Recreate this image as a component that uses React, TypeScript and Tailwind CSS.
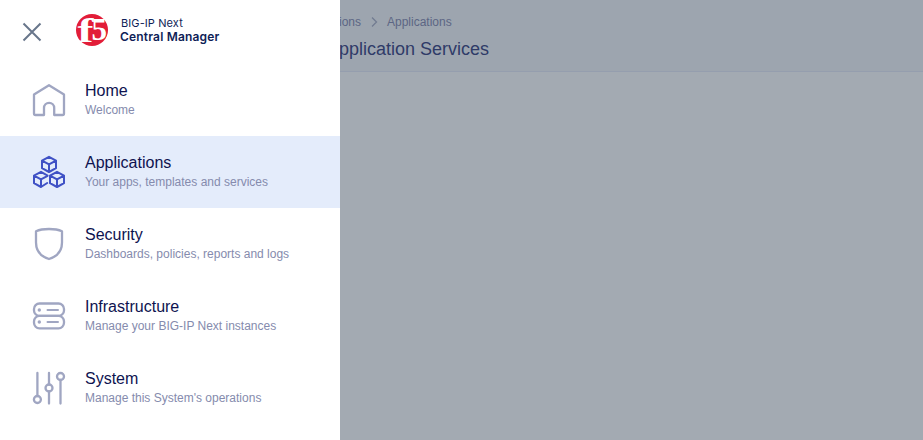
import type { ReactNode } from "react";

function Icon({ children }: { children: ReactNode }) {
  return (
    <svg
      className="size-10 shrink-0"
      viewBox="0 0 40 40"
      fill="none"
      stroke="currentColor"
      strokeWidth="2.3"
      strokeLinecap="round"
      strokeLinejoin="round"
    >
      {children}
    </svg>
  );
}

const items = [
  {
    title: "Home",
    text: "Welcome",
    icon: <path d="M5 14.5 20 5.2 35 14.5V33.5Q35 35 33.5 35H25.2V28A5.1 5.1 0 0 0 15 28V35H6.5Q5 35 5 33.5Z" />,
  },
  {
    title: "Applications",
    text: "Your apps, templates and services",
    active: true,
    icon: (
      <g strokeWidth="2">
        <path d="M20 4.8 27 8.6V16.2L20 20 13 16.2V8.6ZM13.5 8.8 20 12.4 26.5 8.8M20 12.4V19.5" />
        <path d="M18.2 31 12 35 5 31.2V23.6L12 19.8 18.6 23.6M5.5 23.8 12 27.4 18.6 23.8M12 27.4V34.5" />
        <path d="M28 19.8 35 23.6V31.2L28 35 21 31.2V23.6ZM21.5 23.8 28 27.4 34.5 23.8M28 27.4V34.5" />
      </g>
    ),
  },
  {
    title: "Security",
    text: "Dashboards, policies, reports and logs",
    icon: <path d="M7 7.3Q12 5 20 5T33 7.3V18.5C33 27 28 32.5 20 35C12 32.5 7 27 7 18.5Z" />,
  },
  {
    title: "Infrastructure",
    text: "Manage your BIG-IP Next instances",
    icon: (
      <>
        <rect x="5" y="7.5" width="30" height="12.4" rx="5.5" />
        <rect x="5" y="19.9" width="30" height="12.4" rx="5.5" />
        <path d="M18.5 14H29M18.5 26H29" strokeWidth="2" />
        <path d="M10.3 14H10.31M10.3 26H10.31" strokeWidth="3.4" />
      </>
    ),
  },
  {
    title: "System",
    text: "Manage this System's operations",
    icon: (
      <>
        <path d="M8.4 5V28M20 5V16.5M20 23.5V35.5M31.5 12V35.5" />
        <circle cx="8.4" cy="31.5" r="3.5" />
        <circle cx="20" cy="20" r="3.5" />
        <circle cx="31.5" cy="8.5" r="3.5" />
      </>
    ),
  },
];

export default function App() {
  return (
    <div className="flex h-[440px] w-full overflow-hidden font-['Liberation_Sans',Arial,sans-serif]">
      <aside className="w-[340px] shrink-0 bg-white">
        <header className="flex h-16 items-start pt-3">
          <svg className="mt-2 ml-[21px] size-[22px]" viewBox="0 0 22 22" fill="none" stroke="#68768b" strokeWidth="2">
            <path d="M2.5 3.5 19.5 20.5M19.5 3.5 2.5 20.5" />
          </svg>
          <svg className="ml-8 size-9" viewBox="0 0 36 36">
            <circle cx="17" cy="18" r="16" fill="#e21d38" />
            <g fill="white" fontFamily="Liberation Serif" fontWeight="700">
              <text x="2.5" y="29.5" fontSize="34" textLength="16" lengthAdjust="spacingAndGlyphs">f</text>
              <text x="16.5" y="28" fontSize="32" textLength="15.5" lengthAdjust="spacingAndGlyphs">5</text>
            </g>
          </svg>
          <div className="ml-[9px] pt-1 font-['Inter',sans-serif] text-[#0f1e57]">
            <div className="pl-px text-[11px] leading-[14px] tracking-[0.1px]">BIG-IP Next</div>
            <div className="text-[12px] leading-[14px] font-semibold tracking-[0.18px]">Central Manager</div>
          </div>
        </header>
        <nav>
          {items.map((item) => (
            <div
              key={item.title}
              className={`flex h-[72px] items-center gap-4 pl-[29px] ${item.active ? "bg-[#e4ecfb] text-[#3f51c5]" : "text-[#a0a6c2]"}`}
            >
              <Icon>{item.icon}</Icon>
              <div>
                <div className="text-base leading-5 text-[#0e1350]">{item.title}</div>
                <div className="text-xs leading-[18px] text-[#858bad]">{item.text}</div>
              </div>
            </div>
          ))}
        </nav>
      </aside>
      <main className="min-w-0 flex-1 overflow-hidden bg-[#a3aab2]">
        <header className="h-[72px] border-b border-[#959eae] bg-[#9da5af] pt-[13px]">
          <div className="-ml-px flex h-[18px] items-center text-xs text-[#5c6684]">
            <span>ions</span>
            <svg className="mx-2 size-[10px]" viewBox="0 0 10 10" fill="none" stroke="#727c91" strokeWidth="1.3">
              <path d="m3 .5 4.5 4.5L3 9.5" />
            </svg>
            <span>Applications</span>
          </div>
          <h1 className="-ml-[13px] pt-1.5 text-lg leading-6 whitespace-nowrap text-[#2f3b68]">Application Services</h1>
        </header>
      </main>
    </div>
  );
}
